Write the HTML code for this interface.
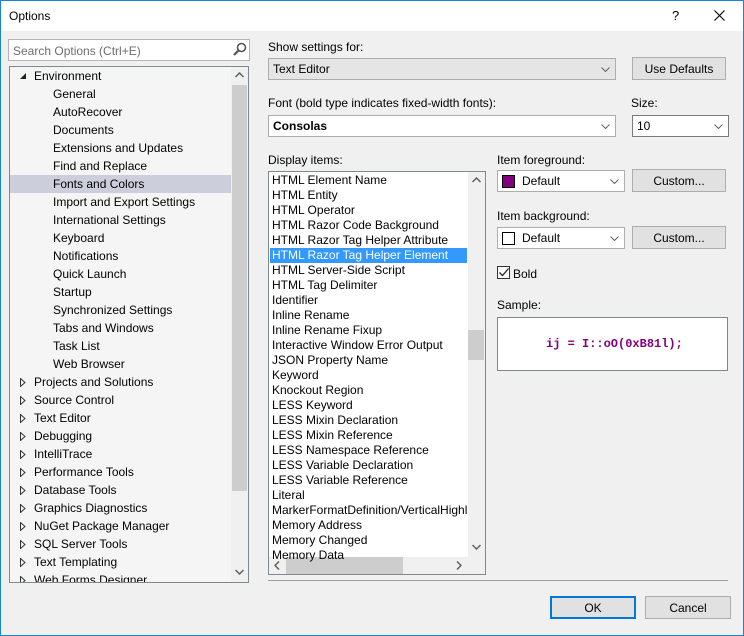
<!DOCTYPE html>
<html><head><meta charset="utf-8"><style>
*{box-sizing:border-box;margin:0;padding:0}
body{width:744px;height:636px;overflow:hidden;background:#f0f0f0;font-family:"Liberation Sans",sans-serif;font-size:12px;color:#000;position:relative}
.a{position:absolute}
.win{left:0;top:0;width:744px;height:636px;border:1px solid #1883d7}
.title{left:1px;top:1px;width:742px;height:30px;background:#fff}
.lbl{position:absolute;white-space:nowrap;font-size:12px}
.combo{position:absolute;border:1px solid #adadad;background:#fff;height:22px;padding:3px 0 0 4px;white-space:nowrap}
.btn{position:absolute;border:1px solid #adadad;background:#e1e1e1;height:23px;text-align:center;padding-top:4px}
.chev{position:absolute;right:5px;top:8px}
.tree{left:9px;top:66px;width:240px;height:517px;border:1px solid #828790;background:#f5f5f5;overflow:hidden}
.ti{position:absolute;white-space:nowrap;height:18px;line-height:18px}
.list{left:268px;top:171px;width:218px;height:404px;border:1px solid #828790;background:#fff;overflow:hidden}
.li{position:absolute;left:3px;white-space:nowrap;height:15px;line-height:15px}
</style></head><body>
<div class="a win"></div>
<div class="a title"></div>
<div class="lbl" style="left:9px;top:9px">Options</div>
<div class="lbl" style="left:672px;top:8px;font-size:13px">?</div>
<svg class="a" style="left:714px;top:10px" width="11" height="11"><path d="M0.5 0.5L10.5 10.5M10.5 0.5L0.5 10.5" stroke="#000" stroke-width="1.1"/></svg>

<div class="a" style="left:8px;top:39px;width:242px;height:22px;border:1px solid #b5b5b5;background:#fff"></div>
<div class="lbl" style="left:13px;top:44px;color:#6d6d6d">Search Options (Ctrl+E)</div>
<svg class="a" style="left:233px;top:42px" width="14" height="14"><circle cx="8.5" cy="5.5" r="4" fill="none" stroke="#555" stroke-width="1.6"/><path d="M5.5 8.5L1 13" stroke="#555" stroke-width="2.2"/></svg>

<div class="a tree">
<div class="a" style="left:221px;top:0;width:17px;height:515px;background:#f0f0f0"></div>
<div class="a" style="left:222px;top:18px;width:15px;height:406px;background:#cdcdcd"></div>
<svg class="a" style="left:225px;top:5px" width="9" height="6"><path d="M0.5 5L4.5 1L8.5 5" fill="none" stroke="#606060" stroke-width="1.5"/></svg>
<svg class="a" style="left:225px;top:502px" width="9" height="6"><path d="M0.5 1L4.5 5L8.5 1" fill="none" stroke="#606060" stroke-width="1.5"/></svg>
<div class="a" style="left:0;top:108px;width:221px;height:18px;background:#cccedb"></div>
<svg class="a" style="left:9px;top:5px" width="8" height="8"><path d="M7 1L7 7L1 7Z" fill="#222"/></svg>
<div class="ti" style="left:24px;top:0">Environment</div>
<div class="ti" style="left:43px;top:18px">General</div>
<div class="ti" style="left:43px;top:36px">AutoRecover</div>
<div class="ti" style="left:43px;top:54px">Documents</div>
<div class="ti" style="left:43px;top:72px">Extensions and Updates</div>
<div class="ti" style="left:43px;top:90px">Find and Replace</div>
<div class="ti" style="left:43px;top:108px">Fonts and Colors</div>
<div class="ti" style="left:43px;top:126px">Import and Export Settings</div>
<div class="ti" style="left:43px;top:144px">International Settings</div>
<div class="ti" style="left:43px;top:162px">Keyboard</div>
<div class="ti" style="left:43px;top:180px">Notifications</div>
<div class="ti" style="left:43px;top:198px">Quick Launch</div>
<div class="ti" style="left:43px;top:216px">Startup</div>
<div class="ti" style="left:43px;top:234px">Synchronized Settings</div>
<div class="ti" style="left:43px;top:252px">Tabs and Windows</div>
<div class="ti" style="left:43px;top:270px">Task List</div>
<div class="ti" style="left:43px;top:288px">Web Browser</div>
<div id="tl"></div>
</div>

<div class="lbl" style="left:268px;top:40px">Show settings for:</div>
<div class="combo" style="left:268px;top:58px;width:348px;background:#e5e5e5">Text Editor<svg class="chev" width="9" height="5"><path d="M0.5 0.5L4.5 4.5L8.5 0.5" fill="none" stroke="#606060"/></svg></div>
<div class="btn" style="left:632px;top:57px;width:94px">Use Defaults</div>
<div class="lbl" style="left:268px;top:96px">Font (bold type indicates fixed-width fonts):</div>
<div class="combo" style="left:268px;top:115px;width:348px;font-weight:bold">Consolas<svg class="chev" width="9" height="5"><path d="M0.5 0.5L4.5 4.5L8.5 0.5" fill="none" stroke="#606060"/></svg></div>
<div class="lbl" style="left:631px;top:96px">Size:</div>
<div class="combo" style="left:632px;top:115px;width:97px;border-color:#7a7a7a">10<svg class="chev" width="9" height="5"><path d="M0.5 0.5L4.5 4.5L8.5 0.5" fill="none" stroke="#606060"/></svg></div>

<div class="lbl" style="left:268px;top:153px">Display items:</div>
<div class="a list">
<div class="a" style="left:199px;top:0;width:17px;height:385px;background:#f0f0f0"></div>
<div class="a" style="left:199px;top:158px;width:16px;height:30px;background:#cdcdcd"></div>
<div class="a" style="left:0;top:385px;width:216px;height:17px;background:#f0f0f0"></div>
<div class="a" style="left:17px;top:385px;width:117px;height:17px;background:#cdcdcd"></div>
<svg class="a" style="left:203px;top:5px" width="9" height="6"><path d="M0.5 5L4.5 1L8.5 5" fill="none" stroke="#606060" stroke-width="1.5"/></svg>
<svg class="a" style="left:203px;top:372px" width="9" height="6"><path d="M0.5 1L4.5 5L8.5 1" fill="none" stroke="#606060" stroke-width="1.5"/></svg>
<svg class="a" style="left:5px;top:389px" width="6" height="9"><path d="M5 0.5L1 4.5L5 8.5" fill="none" stroke="#606060" stroke-width="1.5"/></svg>
<svg class="a" style="left:187px;top:389px" width="6" height="9"><path d="M1 0.5L5 4.5L1 8.5" fill="none" stroke="#606060" stroke-width="1.5"/></svg>
<div class="a" style="left:1px;top:76px;width:197px;height:15px;background:#3399ff"></div>
<div id="ll"></div>
</div>

<div class="lbl" style="left:497px;top:153px">Item foreground:</div>
<div class="combo" style="left:497px;top:170px;width:128px;padding-left:24px">Default<svg class="chev" width="9" height="5"><path d="M0.5 0.5L4.5 4.5L8.5 0.5" fill="none" stroke="#606060"/></svg></div>
<div class="a" style="left:502px;top:175px;width:13px;height:13px;background:#800080;border:1px solid #000"></div>
<div class="btn" style="left:632px;top:169px;width:94px">Custom...</div>
<div class="lbl" style="left:497px;top:209px">Item background:</div>
<div class="combo" style="left:497px;top:227px;width:128px;padding-left:24px">Default<svg class="chev" width="9" height="5"><path d="M0.5 0.5L4.5 4.5L8.5 0.5" fill="none" stroke="#606060"/></svg></div>
<div class="a" style="left:502px;top:232px;width:13px;height:13px;background:#fff;border:1px solid #000"></div>
<div class="btn" style="left:632px;top:226px;width:94px">Custom...</div>
<div class="a" style="left:497px;top:266px;width:13px;height:13px;background:#fff;border:1px solid #333"></div>
<svg class="a" style="left:499px;top:268px" width="10" height="9"><path d="M0.5 4.5L3.5 7.5L9.5 0.5" fill="none" stroke="#222" stroke-width="1.3"/></svg>
<div class="lbl" style="left:513px;top:267px">Bold</div>
<div class="lbl" style="left:497px;top:298px">Sample:</div>
<div class="a" style="left:497px;top:317px;width:231px;height:54px;border:1px solid #828790;background:#fff"></div>
<div class="lbl" style="left:546px;top:337px;font-family:'Liberation Mono',monospace;font-weight:bold;font-size:12px;color:#800080">ij = I::oO(0xB81l);</div>

<div class="a" style="left:268px;top:580px;width:460px;height:1px;background:#a0a0a0"></div>
<div class="btn" style="left:550px;top:596px;width:86px;border:2px solid #0078d7;padding-top:3px">OK</div>
<div class="btn" style="left:645px;top:596px;width:86px">Cancel</div>

<script>
var t=["Projects and Solutions","Source Control","Text Editor","Debugging","IntelliTrace","Performance Tools","Database Tools","Graphics Diagnostics","NuGet Package Manager","SQL Server Tools","Text Templating","Web Forms Designer"];
var h="";t.forEach(function(s,i){var y=306+i*18;h+='<svg class="a" style="left:10px;top:'+(y+5)+'px" width="6" height="9"><path d="M0.5 0.5L5 4.5L0.5 8.5Z" fill="none" stroke="#333"/></svg><div class="ti" style="left:24px;top:'+y+'px">'+s+'</div>';});
document.getElementById("tl").outerHTML=h;
var l=["HTML Element Name","HTML Entity","HTML Operator","HTML Razor Code Background","HTML Razor Tag Helper Attribute","HTML Razor Tag Helper Element","HTML Server-Side Script","HTML Tag Delimiter","Identifier","Inline Rename","Inline Rename Fixup","Interactive Window Error Output","JSON Property Name","Keyword","Knockout Region","LESS Keyword","LESS Mixin Declaration","LESS Mixin Reference","LESS Namespace Reference","LESS Variable Declaration","LESS Variable Reference","Literal","MarkerFormatDefinition/VerticalHighlight","Memory Address","Memory Changed","Memory Data"];
h="";l.forEach(function(s,i){h+='<div class="li" style="top:'+(i*15+1)+'px;width:196px;overflow:hidden;'+(i==5?'color:#fff':'')+'">'+s+'</div>';});
document.getElementById("ll").outerHTML=h;
</script>
</body></html>
